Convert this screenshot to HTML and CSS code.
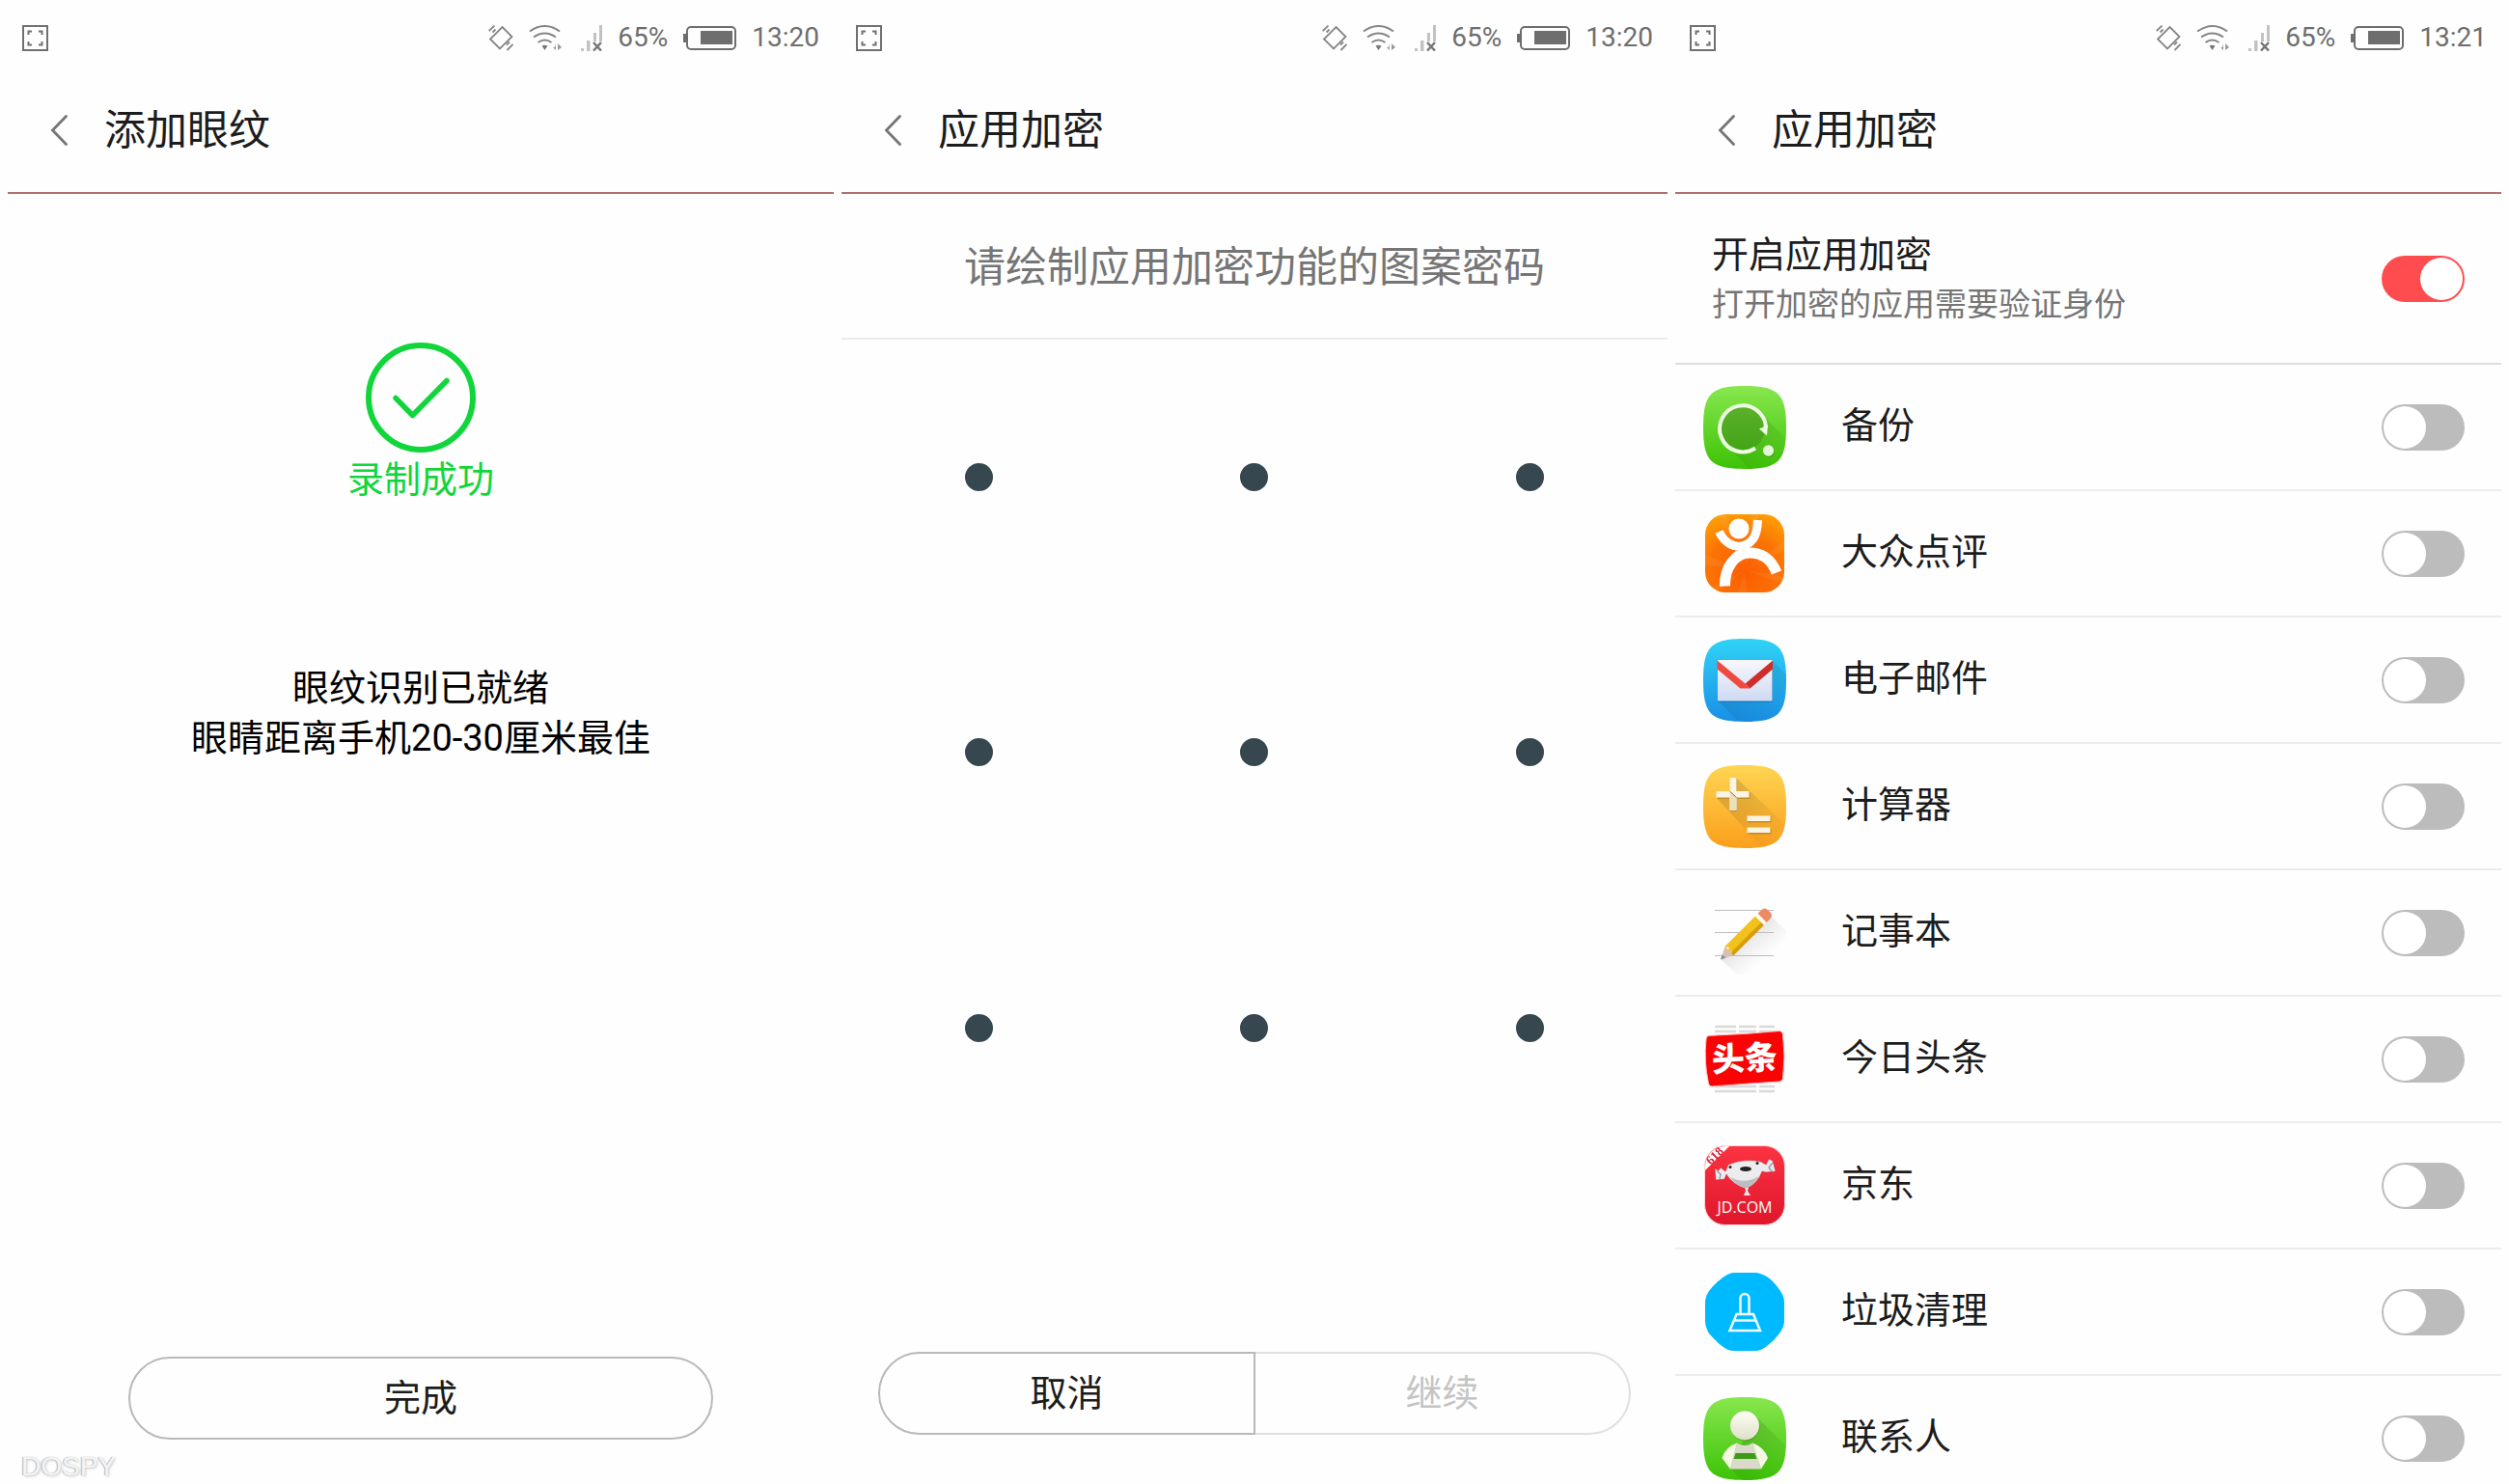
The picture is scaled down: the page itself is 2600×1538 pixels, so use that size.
FILE: index.html
```html
<!DOCTYPE html>
<html lang="zh-CN">
<head>
  <meta charset="UTF-8">
  <meta name="viewport" content="width=device-width, initial-scale=1.0">
  <title>应用加密</title>
  <link rel="stylesheet" href="styles.css">
</head>
<body>
  <!-- Shared icons and gradients -->
  <svg class="defs" width="0" height="0" aria-hidden="true">
    <defs>
      <linearGradient id="green" x1="0" y1="0" x2="0" y2="1">
        <stop offset="0" stop-color="#88e74e"/>
        <stop offset="1" stop-color="#3dc307"/>
      </linearGradient>
      <linearGradient id="blue" x1="0" y1="0" x2="0" y2="1">
        <stop offset="0" stop-color="#30d3f6"/>
        <stop offset="1" stop-color="#198fe6"/>
      </linearGradient>
      <linearGradient id="yellow" x1="0" y1="0" x2="0" y2="1">
        <stop offset="0" stop-color="#fed552"/>
        <stop offset="1" stop-color="#fb9f1c"/>
      </linearGradient>
      <linearGradient id="red" x1="0" y1="0" x2="0" y2="1">
        <stop offset="0" stop-color="#fb3342"/>
        <stop offset="1" stop-color="#e0162c"/>
      </linearGradient>
      <radialGradient id="orange" cx="0.5" cy="0.75" r="0.8">
        <stop offset="0" stop-color="#fb5c02"/>
        <stop offset="0.6" stop-color="#fc7405"/>
        <stop offset="1" stop-color="#fe9f04"/>
      </radialGradient>
      <linearGradient id="paper" x1="0" y1="0" x2="0" y2="1">
        <stop offset="0" stop-color="#f8f8fc"/>
        <stop offset="1" stop-color="#cfd9f3"/>
      </linearGradient>
      <linearGradient id="cream" x1="0" y1="0" x2="0" y2="1">
        <stop offset="0" stop-color="#fffff4"/>
        <stop offset="1" stop-color="#dcdfc6"/>
      </linearGradient>
      <linearGradient id="disc" x1="0" y1="0" x2="0" y2="1">
        <stop offset="0" stop-color="#5bb02b"/>
        <stop offset="1" stop-color="#43a416"/>
      </linearGradient>
      <linearGradient id="shade" x1="0" y1="0" x2="1" y2="1">
        <stop offset="0" stop-color="#000" stop-opacity="0.3"/>
        <stop offset="0.9" stop-color="#000" stop-opacity="0"/>
      </linearGradient>
      <linearGradient id="soft-shade" x1="0" y1="0" x2="1" y2="1">
        <stop offset="0.2" stop-color="#000" stop-opacity="0.14"/>
        <stop offset="0.7" stop-color="#000" stop-opacity="0"/>
      </linearGradient>
      <clipPath id="tile-clip">
        <path d="M43 0C78 0 86 8 86 43S78 86 43 86 0 78 0 43 8 0 43 0Z"/>
      </clipPath>
      <clipPath id="jd-clip">
        <rect x="2" y="2" width="82" height="81" rx="21"/>
      </clipPath>
    </defs>
    <symbol id="i-shot" viewBox="0 0 27 27">
      <path d="M1 1h25v25H1z" fill="none" stroke="#707070" stroke-width="2"/>
      <path d="M6.500 10V6.500H10M17 6.500h3.500V10M20.500 17v3.500H17M10 20.500H6.500V17" fill="none" stroke="#707070" stroke-width="2"/>
    </symbol>
    <symbol id="i-vibrate" viewBox="0 0 26 27">
      <path d="M14.500 2L24.500 12 12 24.500 2 14.500z" fill="none" stroke="#868686" stroke-width="1.800"/>
      <path d="M.7 6L6.500.7M4.500 7.500l3-3M19 20.500l3-3M19.500 26l6-6" fill="none" stroke="#868686" stroke-width="1.800"/>
    </symbol>
    <symbol id="i-wifi" viewBox="0 0 34 27">
      <path d="M1 6.500Q16.500-4.500 32 6.500M5 12.500Q16.500 4.500 28 12.500M9.500 18Q16.500 13 23.500 18" fill="none" stroke="#868686" stroke-width="2"/>
      <path d="M13.500 21.500q3-1.500 6 0l-3 4.500z" fill="#777"/>
      <path d="M28 19v7l-3-3h2zM30 26v-7l4 4z" fill="#999"/>
    </symbol>
    <symbol id="i-signal" viewBox="0 0 26 27">
      <path d="M4 24h3v3H4zM10 16h3.500v11H10zM17 8h3v9h-3zM23 0h3v17h-3z" fill="#c2c2c2"/>
      <path d="M17 18l8 8.500M25 18l-8 8.500" stroke="#777" stroke-width="2.500"/>
    </symbol>
    <symbol id="i-battery" viewBox="0 0 55 25">
      <rect x="4" y="1" width="50" height="23" rx="4" fill="none" stroke="#6e6e6e" stroke-width="2"/>
      <path d="M0 8h3v9H0zM18 5h33v14H18z" fill="#6e6e6e"/>
    </symbol>
    <symbol id="i-back" viewBox="0 0 18 32">
      <path d="M16.500 1.500L2.500 16l14 14.500" fill="none" stroke="#757575" stroke-width="2.800" stroke-linecap="round"/>
    </symbol>
  </svg>

  <main class="screens">
    <section class="screen">
      <div class="status">
        <svg class="shot"><use href="#i-shot"/></svg>
        <svg class="vibrate"><use href="#i-vibrate"/></svg>
        <svg class="wifi"><use href="#i-wifi"/></svg>
        <svg class="signal"><use href="#i-signal"/></svg>
        <span>65%</span>
        <svg class="battery"><use href="#i-battery"/></svg>
        <span>13:20</span>
      </div>
      <header class="title-bar">
        <button type="button" class="back" aria-label="返回"><svg class="chevron"><use href="#i-back"/></svg></button>
        <h1>添加眼纹</h1>
      </header>
      <div class="result">
        <svg class="check" viewBox="0 0 114 114">
          <circle cx="57" cy="57" r="54" fill="none" stroke="#10d63b" stroke-width="6"/>
          <path d="M31 57.500l17.500 18L84 39.500" fill="none" stroke="#10d63b" stroke-width="5.500" stroke-linecap="round" stroke-linejoin="round"/>
        </svg>
        <p>录制成功</p>
      </div>
      <p class="hint">眼纹识别已就绪<br>眼睛距离手机20-30厘米最佳</p>
      <button type="button" class="btn done">完成</button>
      <span class="watermark">DOSPY</span>
    </section>

    <section class="screen">
      <div class="status">
        <svg class="shot"><use href="#i-shot"/></svg>
        <svg class="vibrate"><use href="#i-vibrate"/></svg>
        <svg class="wifi"><use href="#i-wifi"/></svg>
        <svg class="signal"><use href="#i-signal"/></svg>
        <span>65%</span>
        <svg class="battery"><use href="#i-battery"/></svg>
        <span>13:20</span>
      </div>
      <header class="title-bar">
        <button type="button" class="back" aria-label="返回"><svg class="chevron"><use href="#i-back"/></svg></button>
        <h1>应用加密</h1>
      </header>
      <p class="prompt">请绘制应用加密功能的图案密码</p>
      <div class="pattern">
        <i></i><i></i><i></i>
        <i></i><i></i><i></i>
        <i></i><i></i><i></i>
      </div>
      <div class="btn-group">
        <button type="button" class="btn">取消</button>
        <button type="button" class="btn" disabled>继续</button>
      </div>
    </section>

    <section class="screen">
      <div class="status">
        <svg class="shot"><use href="#i-shot"/></svg>
        <svg class="vibrate"><use href="#i-vibrate"/></svg>
        <svg class="wifi"><use href="#i-wifi"/></svg>
        <svg class="signal"><use href="#i-signal"/></svg>
        <span>65%</span>
        <svg class="battery"><use href="#i-battery"/></svg>
        <span>13:21</span>
      </div>
      <header class="title-bar">
        <button type="button" class="back" aria-label="返回"><svg class="chevron"><use href="#i-back"/></svg></button>
        <h1>应用加密</h1>
      </header>
      <div class="master">
        <label for="lock-all">开启应用加密<small>打开加密的应用需要验证身份</small></label>
        <input type="checkbox" class="switch" id="lock-all" checked>
      </div>
      <ul class="apps">
        <li>
          <svg class="icon" viewBox="0 0 86 86">
            <g clip-path="url(#tile-clip)">
              <path d="M0 0h86v86H0z" fill="url(#green)"/>
              <path d="M58 27l28 28v31H48L24 61z" fill="url(#shade)" opacity="0.6"/>
            </g>
            <circle cx="41" cy="44" r="23" fill="url(#disc)"/>
            <path d="M54 64.500A24 24 0 1 1 65 43" fill="none" stroke="#ecfbe2" stroke-width="4"/>
            <path d="M58 44.500l9-4-1 11z" fill="#ecfbe2"/>
            <circle cx="68" cy="68" r="6" fill="#318f0c" opacity="0.5"/>
            <circle cx="67.500" cy="67" r="5.700" fill="#e3f6d8"/>
          </svg>
          <label for="app-backup">备份</label>
          <input type="checkbox" class="switch" id="app-backup">
        </li>
        <li>
          <svg class="icon" viewBox="0 0 86 86">
            <rect x="2" y="2" width="82" height="81" rx="21" fill="url(#orange)"/>
            <path d="M43 60L14 2h10zM43 60L50 2h8zM43 60L84 30v9zM43 60L2 44v11zM43 60L84 66v8zM43 60L36 83h9zM43 60L8 78l7 4z" fill="#fff" opacity="0.06"/>
            <circle cx="37" cy="17" r="10.500" fill="#fff"/>
            <path d="M16.500 20C22 32 33 38 43 34S56 22 56.500 8" fill="none" stroke="#fff" stroke-width="9"/>
            <path d="M22.500 76.500C22 57 33 42 48 42S71 50 76 62.500" fill="none" stroke="#fff" stroke-width="11"/>
          </svg>
          <label for="app-dianping">大众点评</label>
          <input type="checkbox" class="switch" id="app-dianping">
        </li>
        <li>
          <svg class="icon" viewBox="0 0 86 86">
            <g clip-path="url(#tile-clip)">
              <path d="M0 0h86v86H0z" fill="url(#blue)"/>
              <path d="M71 22l15 15v49H37L15 64z" fill="url(#shade)" opacity="0.6"/>
            </g>
            <path d="M15 23h57v43H15z" fill="#0d6db4" opacity="0.6"/>
            <path d="M15 22h56.500v42.500H15z" fill="url(#paper)"/>
            <path d="M14.500 22.500v9L38.500 51.500h10L43.500 46.500z" fill="#f04a40"/>
            <path d="M72 22.500v9L48.500 51.500l-5-5z" fill="#cf2d2b"/>
          </svg>
          <label for="app-mail">电子邮件</label>
          <input type="checkbox" class="switch" id="app-mail">
        </li>
        <li>
          <svg class="icon" viewBox="0 0 86 86">
            <g clip-path="url(#tile-clip)">
              <path d="M0 0h86v86H0z" fill="url(#yellow)"/>
              <path d="M34 13l52 50v23H62L14 34h14l6-6z" fill="url(#shade)" opacity="0.55"/>
            </g>
            <path d="M28 14h7v34h-7zM14.500 28h34v7h-34zM46.500 53.500h24v6h-24zM46.500 65.500h24v6h-24z" fill="#a87a1d" opacity="0.6"/>
            <path d="M27.500 13h7v34h-7zM13.500 27h34v6.500h-34zM45.500 52.500h24V58h-24zM45.500 64.500h24V70h-24z" fill="#fbf4e2"/>
            <path d="M27.500 27l7 6.500V47h-7z" fill="#ecdfbd"/>
            <path d="M27.500 27l7 6.500" stroke="#8a6c3a" stroke-width="1"/>
          </svg>
          <label for="app-calc">计算器</label>
          <input type="checkbox" class="switch" id="app-calc">
        </li>
        <li>
          <svg class="icon" viewBox="0 0 86 86">
            <path d="M72 27l14 14v45H35L18 70z" fill="url(#soft-shade)"/>
            <path d="M12 19.500h61M12 42.500h61M12 66.500h61" stroke="#bdbdbd" stroke-width="1.200"/>
            <g transform="translate(18 70.500) rotate(-45)">
              <path d="M0 0L13-6.500v13z" fill="#d6c0b4"/>
              <path d="M0 0l5-2.500v5z" fill="#8d8d90"/>
              <path d="M12-6.500h46v13H12l3-3.500-3-3 3-3z" fill="#f2c21c"/>
              <path d="M13 2.500h45v4H12z" fill="#d79c0b"/>
              <path d="M57-6.500h4v13h-4z" fill="#fffdf4"/>
              <path d="M61-6.500h5q5 0 5 5v3q0 5-5 5h-5z" fill="#ee8a62"/>
            </g>
          </svg>
          <label for="app-notes">记事本</label>
          <input type="checkbox" class="switch" id="app-notes">
        </li>
        <li>
          <svg class="icon" viewBox="0 0 86 86">
            <path d="M12 9h22M37 9h18M58 9h16M12 14h22M37 14h18M58 14h16M12 71h43M58 71h16M12 76h43M58 76h16" stroke="#d9d9d9" stroke-width="2.500"/>
            <path d="M6 18.300Q43 17 79 13.500Q82 13.500 82.500 17Q85.500 40 82.500 63Q82 65.500 79 66Q45 68 9 71Q6 71 5.500 68Q.5 45 3 22Q3.500 18.500 6 18.300z" fill="#f90404" stroke="#ffc4c4" stroke-width="1"/>
            <text class="toutiao" x="43" y="54" text-anchor="middle" transform="rotate(-3 43 43)">头条</text>
          </svg>
          <label for="app-toutiao">今日头条</label>
          <input type="checkbox" class="switch" id="app-toutiao">
        </li>
        <li>
          <svg class="icon" viewBox="0 0 86 86">
            <rect x="1.500" y="1.500" width="83" height="82" rx="21" fill="url(#red)" stroke="#ffd6d8" stroke-width="1"/>
            <g clip-path="url(#jd-clip)">
              <path d="M0 0h29L0 29z" fill="#fff"/>
            </g>
            <text class="jd-badge" x="12" y="16" text-anchor="middle" transform="rotate(-45 12 12)">618</text>
            <path d="M26 21Q43 14 60 18L65 21 68 15l4 2 3 11-10 1-4-1Q57 40 46 45h-4Q30 41 24 31l-2 5-9 1-1-12 4 2 2-3 5 4z" fill="#ececee" stroke="#c8202e" stroke-width="0.500"/>
            <path d="M28 34Q43 42 58 33Q53 42 46 45h-4Q33 42 28 34z" fill="#bdbdc2"/>
            <path d="M14 27l4 4-1 5M72 19l-4 5 3 4" fill="none" stroke="#9aa0b0" stroke-width="1.500"/>
            <ellipse cx="44" cy="25.500" rx="6" ry="2.500" fill="#222"/>
            <circle cx="28" cy="23.500" r="1.500" fill="#222"/>
            <circle cx="56" cy="19.500" r="1.500" fill="#222"/>
            <path d="M43 45h4l-1 3 3 5h-7l2-5z" fill="#e7e7e9"/>
            <text class="jd-name" x="43" y="71" text-anchor="middle">JD.COM</text>
          </svg>
          <label for="app-jd">京东</label>
          <input type="checkbox" class="switch" id="app-jd">
        </li>
        <li>
          <svg class="icon" viewBox="0 0 86 86">
            <path d="M31 2h24Q62 3 68 7.500T80 21Q84 27 84 33v19Q84 58 79 65T66 78Q60 83 54 83H32Q26 83 20 78.500T6 65Q2 58 2 52V33Q2 27 6 21T19 8Q25 3 31 2z" fill="#00baff"/>
            <path d="M38.500 45V28.500a4.500 4.500 0 0 1 9 0V45M34.500 45h17.500l7 17H27.500zM32 51.500h22.500" fill="none" stroke="#f0fbff" stroke-width="2.500"/>
          </svg>
          <label for="app-clean">垃圾清理</label>
          <input type="checkbox" class="switch" id="app-clean">
        </li>
        <li>
          <svg class="icon" viewBox="0 0 86 86">
            <g clip-path="url(#tile-clip)">
              <path d="M0 0h86v86H0z" fill="url(#green)"/>
              <path d="M54 19l32 32v35H40L28 74z" fill="url(#shade)" opacity="0.6"/>
            </g>
            <circle cx="43.500" cy="30.500" r="15" fill="#2f8e0d" opacity="0.6"/>
            <circle cx="43" cy="29.500" r="15" fill="url(#cream)"/>
            <path d="M35 47.500q8 5 16 0l9 27H28z" fill="#dadacb"/>
            <path d="M33.500 58h20l2 6H31.500z" fill="#3d9c17"/>
            <path d="M35 47.500q-12 4-15.500 15.500L28 74.500z" fill="#f7f7e6"/>
            <path d="M51 47.500q12 4 16 15.500L60 74.500z" fill="#f7f7e6"/>
          </svg>
          <label for="app-contacts">联系人</label>
          <input type="checkbox" class="switch" id="app-contacts">
        </li>
      </ul>
    </section>
  </main>
</body>
</html>
```

FILE: styles.css
```css
* {
  box-sizing: border-box;
}

body {
  margin: 0;
  font-family: Roboto, 'Noto Sans CJK SC', sans-serif;
  font-size: 38px;
  line-height: 52px;
  color: #1c1c1c;
  background: #fefefe;
}

h1, p, ul {
  margin: 0;
  padding: 0;
}

.defs {
  position: absolute;
}

.screens {
  display: grid;
  grid-template-columns: repeat(3, 1fr);
  gap: 8px;
  height: 100vh;
  padding: 0 8px;
  overflow: hidden;
}

.screen {
  position: relative;
  display: flex;
  flex-direction: column;
  min-width: 0;
  min-height: 0;
}

/* Status bar */
.status {
  display: flex;
  flex-shrink: 0;
  align-items: center;
  gap: 16px;
  height: 78px;
  padding: 0 15px;
  font-size: 28px;
  color: #6e6e6e;
}

.status svg {
  height: 27px;
}

.status .shot {
  width: 27px;
  margin-right: auto;
}

.vibrate, .signal {
  width: 26px;
}

.wifi {
  width: 34px;
}

.battery {
  width: 55px;
}

/* Title bar */
.title-bar {
  display: flex;
  flex-shrink: 0;
  align-items: center;
  gap: 38px;
  height: 123px;
  padding: 0 44px 8px;
  border-bottom: 2px solid #b07074;
}

.title-bar h1 {
  font-size: 43px;
  font-weight: normal;
}

.back {
  display: flex;
  padding: 0;
  border: none;
  background: none;
  cursor: pointer;
}

.chevron {
  width: 18px;
  height: 32px;
}

/* Buttons */
.btn {
  height: 86px;
  padding: 0;
  border: 2px solid #b9b9b9;
  border-radius: 43px;
  background: none;
  font: inherit;
  color: inherit;
  cursor: pointer;
}

.done {
  align-self: center;
  width: 606px;
  max-width: 90%;
  margin: auto 0 46px;
}

.btn-group {
  display: flex;
  margin: auto 38px 51px;
}

.btn-group .btn {
  flex: 1;
}

.btn-group .btn:first-child {
  border-radius: 43px 0 0 43px;
}

.btn-group .btn:last-child {
  border-left: none;
  border-radius: 0 43px 43px 0;
}

.btn:disabled {
  border-color: #e0e0e0;
  color: #c4c4c4;
  cursor: default;
}

/* Recording result */
.result {
  display: flex;
  flex-direction: column;
  align-items: center;
  gap: 2px;
  margin-top: 154px;
  color: #10d63b;
}

.check {
  width: 114px;
  height: 114px;
}

.hint {
  margin-top: 164px;
  text-align: center;
  color: #000;
}

.watermark {
  position: absolute;
  left: 14px;
  bottom: 2px;
  font: 28px/32px 'Liberation Sans', sans-serif;
  color: #f4f4f4;
  text-shadow: -1px 0 1px #b4b4b4, 1px 1px 3px #c4c4c4;
}

/* Pattern lock */
.prompt {
  flex-shrink: 0;
  height: 151px;
  border-bottom: 2px solid #ececec;
  font-size: 43px;
  line-height: 153px;
  text-align: center;
  color: #757575;
}

.pattern {
  display: grid;
  grid-template-columns: repeat(3, 1fr);
  place-items: center;
  aspect-ratio: 1;
}

.pattern i {
  width: 29px;
  height: 29px;
  border-radius: 50%;
  background: #36474f;
}

/* App list */
.master {
  display: flex;
  flex-shrink: 0;
  align-items: center;
  justify-content: space-between;
  height: 177px;
  padding: 0 38px;
  border-bottom: 2px solid #dedede;
}

.master label {
  padding-top: 3px;
}

.master small {
  display: block;
  font-size: 33px;
  color: #757575;
}

.apps {
  list-style: none;
}

.apps li {
  display: flex;
  align-items: center;
  height: 131px;
  padding: 0 38px 0 29px;
  border-bottom: 2px solid #ececec;
}

.apps label {
  flex: 1;
  margin-left: 57px;
  padding-bottom: 4px;
}

.icon {
  width: 86px;
  height: 86px;
}

.toutiao {
  font: 900 34px 'Noto Sans CJK SC', sans-serif;
  fill: #fff;
}

.jd-badge {
  font: bold 13px 'Liberation Serif', serif;
  fill: #e0223a;
}

.jd-name {
  font: 16px 'Open Sans', sans-serif;
  fill: #fff;
}

.switch {
  appearance: none;
  flex-shrink: 0;
  width: 86px;
  height: 48px;
  margin: 0;
  padding: 2px;
  border-radius: 24px;
  background: #bcbcbc;
  cursor: pointer;
}

.switch::before {
  content: '';
  display: block;
  width: 44px;
  height: 44px;
  border-radius: 50%;
  background: #fff;
}

.switch:checked {
  background: #ff4d4f;
}

.switch:checked::before {
  margin-left: auto;
}
```
